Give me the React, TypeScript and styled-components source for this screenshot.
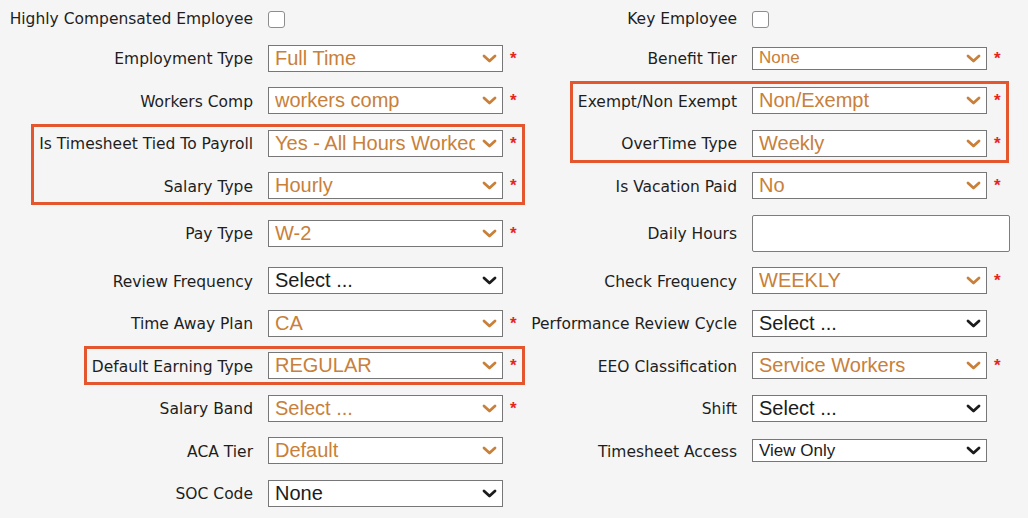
import styled, { createGlobalStyle } from 'styled-components';

type FieldDef = {
  label: string;
  kind: 'select' | 'checkbox' | 'text';
  value?: string;
  plain?: boolean;
  small?: boolean;
  required?: boolean;
  tall?: boolean;
  first?: boolean;
};

type Item = FieldDef | { highlight: FieldDef[] };

const GlobalStyle = createGlobalStyle`
  html, body {
    margin: 0;
    padding: 0;
    background: #f5f5f5;
  }
  body {
    font-family: "DejaVu Sans", Verdana, sans-serif;
    color: #222;
  }
`;

const Page = styled.div`
  display: flex;
  width: 1028px;
  height: 518px;
  padding-top: 7px;
  box-sizing: border-box;
  overflow: hidden;
`;

const Column = styled.div<{ $width: number }>`
  display: flex;
  flex-direction: column;
  gap: 15.5px;
  width: ${({ $width }) => $width}px;
  flex-shrink: 0;
`;

const Highlight = styled.div`
  display: flex;
  flex-direction: column;
  gap: 15.5px;
  align-self: flex-end;
  padding-left: 2px;
  outline: 3px solid #e4572e;
  outline-offset: 3px;
`;

const Row = styled.div<{ $height: number }>`
  display: flex;
  align-items: center;
  justify-content: flex-end;
  height: ${({ $height }) => $height}px;
`;

const Label = styled.label`
  padding-top: 2px;
  font-size: 15.5px;
  white-space: nowrap;
  margin-right: 15px;
  color: #1e1e1e;
`;

const Slot = styled.div`
  display: flex;
  align-items: center;
  width: 235px;
`;

const Checkbox = styled.span`
  display: block;
  width: 17px;
  height: 17px;
  margin-top: 2px;
  box-sizing: border-box;
  border: 1px solid #8d8d8d;
  border-radius: 3px;
  background: #fff;
`;

const SelectBox = styled.div<{ $small?: boolean; $plain?: boolean }>`
  display: flex;
  align-items: center;
  width: 235px;
  height: ${({ $small }) => ($small ? 23 : 27)}px;
  box-sizing: border-box;
  padding: 0 5px 0 6px;
  border: 1px solid #777;
  background: #fff;
  font-family: "Liberation Sans", Arial, sans-serif;
  font-size: ${({ $small }) => ($small ? 17 : 20)}px;
  color: ${({ $plain }) => ($plain ? '#1c1c1c' : '#c8803a')};
`;

const SelectText = styled.span`
  flex: 1;
  min-width: 0;
  margin-right: 7px;
  overflow: hidden;
  white-space: nowrap;
`;

const Chevron = styled.svg`
  flex-shrink: 0;
  width: 15px;
  height: 9px;
`;

const TextInput = styled.input`
  width: 258px;
  height: 37px;
  margin-right: -7px;
  box-sizing: border-box;
  border: 1px solid #7d7d7d;
  border-radius: 2px;
  background: #fff;
  font-family: "Liberation Sans", Arial, sans-serif;
  font-size: 18px;
  padding: 0 6px;
  outline: none;
`;

const Req = styled.span`
  width: 16px;
  box-sizing: border-box;
  padding-left: 7px;
  font-family: "Liberation Sans", Arial, sans-serif;
  font-weight: bold;
  font-size: 17px;
  line-height: 17px;
  color: #e5261d;
`;

const left: Item[] = [
  { label: 'Highly Compensated Employee', kind: 'checkbox', first: true },
  { label: 'Employment Type', kind: 'select', value: 'Full Time', required: true },
  { label: 'Workers Comp', kind: 'select', value: 'workers comp', required: true },
  {
    highlight: [
      { label: 'Is Timesheet Tied To Payroll', kind: 'select', value: 'Yes - All Hours Worked', required: true },
      { label: 'Salary Type', kind: 'select', value: 'Hourly', required: true },
    ],
  },
  { label: 'Pay Type', kind: 'select', value: 'W-2', required: true, tall: true },
  { label: 'Review Frequency', kind: 'select', value: 'Select ...', plain: true },
  { label: 'Time Away Plan', kind: 'select', value: 'CA', required: true },
  { highlight: [{ label: 'Default Earning Type', kind: 'select', value: 'REGULAR', required: true }] },
  { label: 'Salary Band', kind: 'select', value: 'Select ...', required: true },
  { label: 'ACA Tier', kind: 'select', value: 'Default' },
  { label: 'SOC Code', kind: 'select', value: 'None', plain: true },
];

const right: Item[] = [
  { label: 'Key Employee', kind: 'checkbox', first: true },
  { label: 'Benefit Tier', kind: 'select', value: 'None', small: true, required: true },
  {
    highlight: [
      { label: 'Exempt/Non Exempt', kind: 'select', value: 'Non/Exempt', required: true },
      { label: 'OverTime Type', kind: 'select', value: 'Weekly', required: true },
    ],
  },
  { label: 'Is Vacation Paid', kind: 'select', value: 'No', required: true },
  { label: 'Daily Hours', kind: 'text', tall: true },
  { label: 'Check Frequency', kind: 'select', value: 'WEEKLY', required: true },
  { label: 'Performance Review Cycle', kind: 'select', value: 'Select ...', plain: true },
  { label: 'EEO Classification', kind: 'select', value: 'Service Workers', required: true },
  { label: 'Shift', kind: 'select', value: 'Select ...', plain: true },
  { label: 'Timesheet Access', kind: 'select', value: 'View Only', plain: true, small: true },
];

const ChevronIcon = ({ plain }: { plain?: boolean }) => (
  <Chevron viewBox="0 0 15 9">
    <path
      d="M2 2 L7.5 7 L13 2"
      fill="none"
      stroke={plain ? '#1c1c1c' : '#c8803a'}
      strokeWidth="2.8"
      strokeLinecap="round"
      strokeLinejoin="round"
    />
  </Chevron>
);

const Field = ({ field }: { field: FieldDef }) => {
  const height = field.first ? 22 : field.tall ? 37 : 27;

  if (field.kind === 'text') {
    return (
      <Row $height={height}>
        <Label>{field.label}</Label>
        <TextInput type="text" readOnly />
      </Row>
    );
  }

  return (
    <Row $height={height}>
      <Label>{field.label}</Label>
      {field.kind === 'checkbox' ? (
        <Slot>
          <Checkbox />
        </Slot>
      ) : (
        <SelectBox $small={field.small} $plain={field.plain}>
          <SelectText>{field.value}</SelectText>
          <ChevronIcon plain={field.plain} />
        </SelectBox>
      )}
      <Req>{field.required ? '*' : ''}</Req>
    </Row>
  );
};

const renderItems = (items: Item[]) =>
  items.map((item, i) =>
    'highlight' in item ? (
      <Highlight key={i}>
        {item.highlight.map((f) => (
          <Field key={f.label} field={f} />
        ))}
      </Highlight>
    ) : (
      <Field key={item.label} field={item} />
    )
  );

const App = () => (
  <>
    <GlobalStyle />
    <Page>
      <Column $width={519}>{renderItems(left)}</Column>
      <Column $width={484}>{renderItems(right)}</Column>
    </Page>
  </>
);

export default App;
